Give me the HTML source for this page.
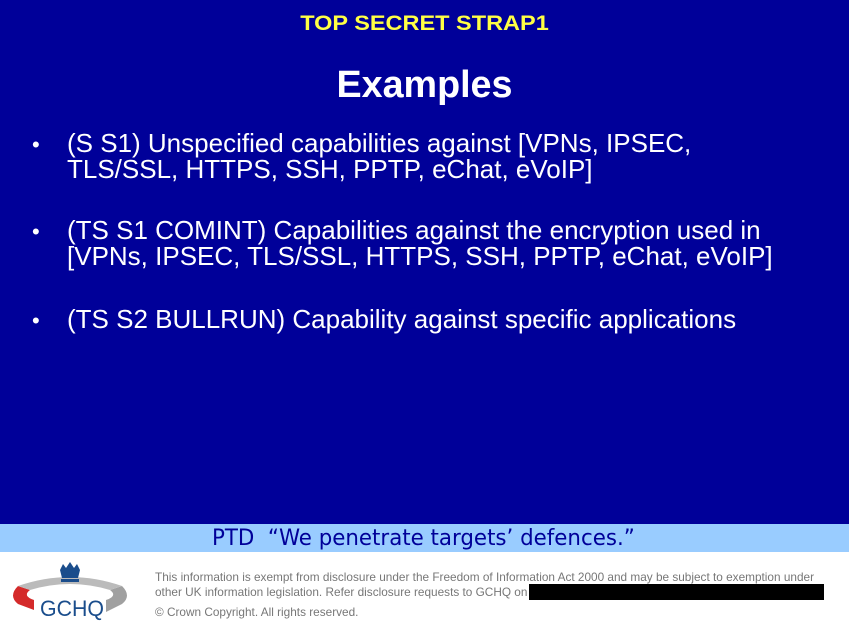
<!DOCTYPE html>
<html><head><meta charset="utf-8"><style>
body{margin:0;width:849px;height:634px;overflow:hidden;background:#fff;font-family:"Liberation Sans",sans-serif;position:relative}
.top{position:absolute;left:0;top:0;width:849px;height:524px;background:#000099}
.band{position:absolute;left:0;top:524px;width:849px;height:28px;background:#99ccff}
.t{position:absolute;white-space:nowrap;transform-origin:0 0}
.l{color:#fff;font-size:26px}
.b{position:absolute;color:#fff;font-size:22px;left:32px}
.f{color:#777;font-size:11.8px}
</style></head><body>
<div class="top"></div>
<div class="band"></div>
<div class="t" style="left:0;width:849px;text-align:center;top:11px;color:#ffff44;font-weight:bold;font-size:23.5px;transform:scaleY(0.9)">TOP SECRET STRAP1</div>
<div class="t" style="left:0;width:849px;text-align:center;top:63px;color:#fff;font-weight:bold;font-size:37.7px">Examples</div>
<div class="b" style="top:132px">•</div>
<div class="t l" style="left:67px;top:128px">(S S1) Unspecified capabilities against [VPNs, IPSEC,</div>
<div class="t l" style="left:67px;top:154px">TLS/SSL, HTTPS, SSH, PPTP, eChat, eVoIP]</div>
<div class="b" style="top:219px">•</div>
<div class="t l" style="left:67px;top:215px">(TS S1 COMINT) Capabilities against the encryption used in</div>
<div class="t l" style="left:67px;top:241px">[VPNs, IPSEC, TLS/SSL, HTTPS, SSH, PPTP, eChat, eVoIP]</div>
<div class="b" style="top:308px">•</div>
<div class="t l" style="left:67px;top:304px">(TS S2 BULLRUN) Capability against specific applications</div>
<div class="t" style="left:212px;top:526px;color:#000099;font-family:'DejaVu Sans',sans-serif;font-size:22px;transform:scaleX(0.97)">PTD&nbsp; “We penetrate targets’ defences.”</div>
<svg style="position:absolute;left:8px;top:560px" width="124" height="62" viewBox="0 0 124 62">
<path d="M10 26 Q0 36 10 44 L26 50 L26 40 Q14 36 22 30 Z" fill="#d42a2a"/>
<path d="M114 26 Q124 36 114 44 L98 52 L98 40 Q110 36 102 30 Z" fill="#a0a0a0"/>
<path d="M10 26 Q62 8 114 26 L102 30 Q62 18 22 30 Z" fill="#bbb"/>
<path d="M52 10 L55 4 L58 8 L62 2 L66 8 L69 4 L72 10 L70 18 L54 18 Z" fill="#1a4d8c"/>
<rect x="53" y="19" width="18" height="3" fill="#1a4d8c"/>
<text x="32" y="56" font-family="Liberation Sans,sans-serif" font-size="22" fill="#1a4d8c" textLength="64" lengthAdjust="spacingAndGlyphs">GCHQ</text>
</svg>
<div class="t f" style="left:155px;top:570px">This information is exempt from disclosure under the Freedom of Information Act 2000 and may be subject to exemption under</div>
<div class="t f" style="left:155px;top:585px">other UK information legislation. Refer disclosure requests to GCHQ on</div>
<div style="position:absolute;left:529px;top:584px;width:295px;height:16px;background:#000"></div>
<div class="t f" style="left:155px;top:605px">© Crown Copyright. All rights reserved.</div>
</body></html>
